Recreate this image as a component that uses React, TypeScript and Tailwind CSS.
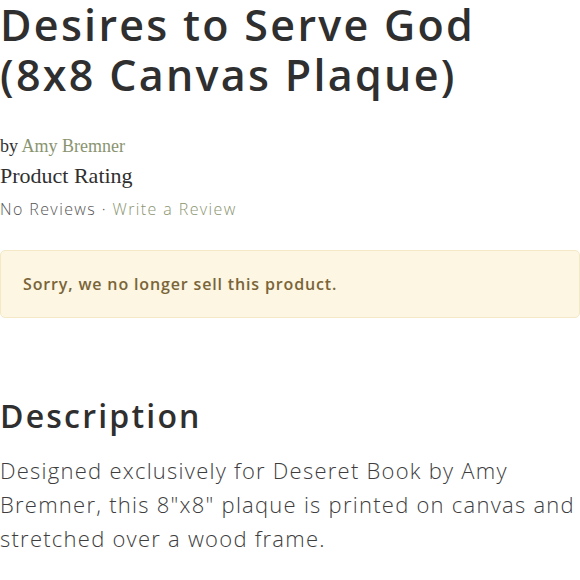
export default function App() {
  return (
    <div className="w-[580px] h-[580px] overflow-hidden bg-white text-[#333] font-['Open_Sans',sans-serif]">
      {/* Title */}
      <h1 className="text-[43px] leading-[50px] font-semibold tracking-[2.3px] text-[#2f2f2f] whitespace-nowrap">
        Desires to Serve God
        <br />
        (8x8 Canvas Plaque)
      </h1>

      {/* Author + rating */}
      <div className="mt-[36px] font-['Liberation_Serif',serif] text-[18px] leading-[20px] text-[#333]">
        by <span className="text-[#8a9470]">Amy Bremner</span>
      </div>
      <div className="mt-[9px] font-['Liberation_Serif',serif] text-[22px] leading-[22px] text-[#2f2f2f]">
        Product Rating
      </div>
      <div className="mt-[12px] text-[16px] leading-[20px] font-light tracking-[1.4px] text-[#555]">
        No Reviews · <span className="text-[#8a9470]">Write a Review</span>
      </div>

      {/* Notice */}
      <div className="mt-[31px] h-[68px] flex items-center px-[22px] bg-[#fcf6e2] border border-[#f4e8c6] rounded-[5px]">
        <span className="text-[16px] font-semibold tracking-[0.85px] text-[#7a6438]">
          Sorry, we no longer sell this product.
        </span>
      </div>

      {/* Description */}
      <h2 className="mt-[78px] text-[32px] leading-[40px] font-semibold tracking-[2.2px] text-[#2f2f2f]">
        Description
      </h2>
      <p className="mt-[17px] text-[22px] leading-[34px] font-light tracking-[1.25px] text-[#3d3d3d] whitespace-nowrap">
        Designed exclusively for Deseret Book by Amy
        <br />
        Bremner, this 8"x8" plaque is printed on canvas and
        <br />
        stretched over a wood frame.
      </p>
    </div>
  );
}
